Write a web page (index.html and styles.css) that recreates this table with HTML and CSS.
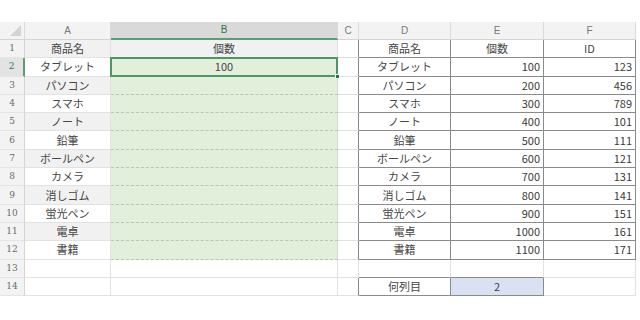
FILE: index.html
```html
<!DOCTYPE html>
<html lang="ja">
<head>
<meta charset="utf-8">
<link rel="stylesheet" href="styles.css">
</head>
<body>
<div class="sheet">
<div class="grid">
  <div class="c h corner"></div><div class="c h">A</div><div class="c h hsel">B</div><div class="c h">C</div><div class="c h">D</div><div class="c h">E</div><div class="c h">F</div>

  <div class="c r">1</div><div class="c band">商品名</div><div class="c band">個数</div><div class="c cd"></div><div class="c t">商品名</div><div class="c t">個数</div><div class="c t">ID</div>
  <div class="c r rsel">2</div><div class="c">タブレット</div><div class="c g sel">100</div><div class="c cd"></div><div class="c t">タブレット</div><div class="c t n">100</div><div class="c t n">123</div>
  <div class="c r">3</div><div class="c band">パソコン</div><div class="c g"></div><div class="c cd"></div><div class="c t">パソコン</div><div class="c t n">200</div><div class="c t n">456</div>
  <div class="c r">4</div><div class="c">スマホ</div><div class="c g"></div><div class="c cd"></div><div class="c t">スマホ</div><div class="c t n">300</div><div class="c t n">789</div>
  <div class="c r">5</div><div class="c band">ノート</div><div class="c g"></div><div class="c cd"></div><div class="c t">ノート</div><div class="c t n">400</div><div class="c t n">101</div>
  <div class="c r">6</div><div class="c">鉛筆</div><div class="c g"></div><div class="c cd"></div><div class="c t">鉛筆</div><div class="c t n">500</div><div class="c t n">111</div>
  <div class="c r">7</div><div class="c band">ボールペン</div><div class="c g"></div><div class="c cd"></div><div class="c t">ボールペン</div><div class="c t n">600</div><div class="c t n">121</div>
  <div class="c r">8</div><div class="c">カメラ</div><div class="c g"></div><div class="c cd"></div><div class="c t">カメラ</div><div class="c t n">700</div><div class="c t n">131</div>
  <div class="c r">9</div><div class="c band">消しゴム</div><div class="c g"></div><div class="c cd"></div><div class="c t">消しゴム</div><div class="c t n">800</div><div class="c t n">141</div>
  <div class="c r">10</div><div class="c">蛍光ペン</div><div class="c g"></div><div class="c cd"></div><div class="c t">蛍光ペン</div><div class="c t n">900</div><div class="c t n">151</div>
  <div class="c r">11</div><div class="c band">電卓</div><div class="c g"></div><div class="c cd"></div><div class="c t">電卓</div><div class="c t n">1000</div><div class="c t n">161</div>
  <div class="c r">12</div><div class="c">書籍</div><div class="c g"></div><div class="c cd"></div><div class="c t">書籍</div><div class="c t n">1100</div><div class="c t n">171</div>
  <div class="c r">13</div><div class="c"></div><div class="c"></div><div class="c"></div><div class="c bb"></div><div class="c bb"></div><div class="c"></div>
  <div class="c r">14</div><div class="c"></div><div class="c"></div><div class="c cd"></div><div class="c t">何列目</div><div class="c t blue">2</div><div class="c"></div>
</div>
</div>
</body>
</html>
```

FILE: styles.css
```css
html, body {
  margin: 0;
  background: #ffffff;
}

body {
  font-family: "Noto Sans CJK JP", "Noto Sans", sans-serif;
}

.sheet {
  padding-top: 22px;
}

.grid {
  display: grid;
  grid-template-columns: 25px 86px 227px 21px 92px 93px 92px;
  grid-template-rows: 18px repeat(14, 18.3px);
  width: 636px;
}

.c {
  box-sizing: border-box;
  border-right: 1px solid #e2e2e2;
  border-bottom: 1px solid #e2e2e2;
  font-size: 11px;
  color: #454545;
  display: flex;
  align-items: center;
  justify-content: center;
  line-height: 1;
  white-space: nowrap;
  overflow: hidden;
}

.h {
  background: #f3f3f3;
  color: #777777;
  font-family: "Liberation Sans", sans-serif;
  font-size: 10px;
  border-bottom-color: #d4d4d4;
  border-right-color: #dadada;
}

.corner {
  position: relative;
}

.corner::after {
  content: "";
  position: absolute;
  right: 3px;
  bottom: 3px;
  width: 0;
  height: 0;
  border-left: 11px solid transparent;
  border-bottom: 11px solid #d3d3d3;
}

.hsel {
  background: #d9d9d9;
  color: #2a7a48;
  border-bottom: 2px solid #5b9e72;
}

.r {
  background: #f3f3f3;
  color: #6a6a6a;
  font-family: "DejaVu Serif", serif;
  font-size: 9px;
  border-right-color: #d4d4d4;
  border-bottom-color: #e4e4e4;
}

.rsel {
  background: #e3e3e3;
  color: #2a7a48;
  border-right: 2px solid #5b9e72;
}

.band {
  background: #f1f1f1;
}

.g {
  background: #e2efda;
  border-bottom: 1px dashed #b9c6b2;
  border-right-color: #d3dccd;
}

.sel {
  position: relative;
  overflow: visible;
}

.sel::before {
  content: "";
  position: absolute;
  left: -1px;
  top: -1px;
  right: -1px;
  bottom: -1px;
  border: 2px solid #4f9667;
}

.sel::after {
  content: "";
  position: absolute;
  right: -3px;
  bottom: -3px;
  width: 5px;
  height: 5px;
  background: #217346;
  border: 1px solid #ffffff;
  box-sizing: border-box;
}

.cd {
  border-right: 1px solid #8a8a8a;
}

.t {
  border-right: 1px solid #8a8a8a;
  border-bottom: 1px solid #8a8a8a;
  background: #ffffff;
}

.grid > .t:nth-child(5),
.grid > .t:nth-child(6),
.grid > .t:nth-child(7) {
  border-top: 0;
}

.n {
  justify-content: flex-end;
  padding-right: 3px;
  color: #3a3a3a;
}

.bb {
  border-bottom: 1px solid #8a8a8a;
}

.blue {
  background: #d9e1f2;
  color: #3a3a3a;
}
```
